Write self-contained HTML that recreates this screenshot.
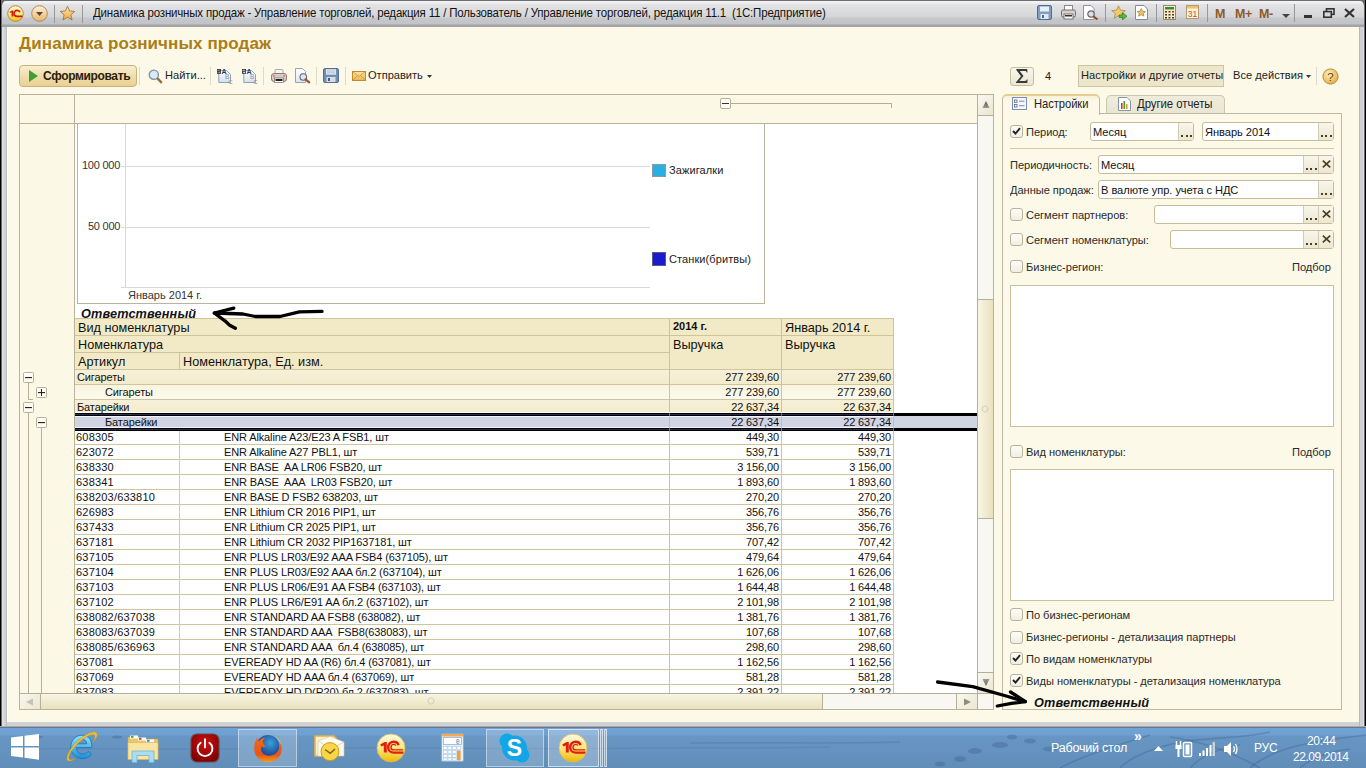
<!DOCTYPE html>
<html><head><meta charset="utf-8">
<style>
*{box-sizing:border-box;margin:0;padding:0}
html,body{width:1366px;height:768px;overflow:hidden;background:#000}
body{position:relative;font-family:"Liberation Sans",sans-serif;font-size:11px;color:#1a1a1a}
.a{position:absolute}
.t{position:absolute;white-space:pre;line-height:1}
svg{position:absolute;overflow:visible}
/* window */
#frame{left:1px;top:0;width:1364px;height:728px;background:#d0d1d4;border-radius:6px 6px 0 0}
#titlebar{left:2px;top:0;width:1362px;height:27px;border-radius:6px 6px 0 0;background:linear-gradient(#6e6e70 0,#6e6e70 1px,#f4f4f6 1px,#f0f0f2 3px,#e4e4e6 4px,#d4d5d7 17px,#c7c8cb 18px,#c2c3c6 24px,#a3a4a6 25px,#a3a4a6 27px)}
#content{left:7px;top:27px;width:1352px;height:695px;background:#fcf9e8}
.sep{position:absolute;width:1px;background:#97989b}
.tsep{position:absolute;width:1px;height:18px;background:#dedacb}

.tb{position:absolute;width:11px;height:11px;border:1px solid #b5b09a;border-radius:1.5px;background:#fdfcf5}
.tb i{position:absolute;left:1px;top:4px;width:7px;height:1px;background:#2a2410;box-shadow:0 .4px 0 rgba(42,36,16,.35)}
.tb b{position:absolute;left:4px;top:1px;width:1px;height:7px;background:#2a2410}
.hd{font-size:12.7px;color:#111}
.r{position:absolute;left:74px;width:820px;height:15px;font-size:11px;line-height:15px;color:#111;white-space:pre}
.r span{position:absolute;top:1px;letter-spacing:-0.12px}
.c1{left:2px;letter-spacing:0.2px!important}.c2{left:150px}.g1{left:3px}.g2{left:31px}
.c3{right:115px}.c4{right:3px}

.lb{font-size:11.8px;color:#2a2a2a;letter-spacing:-0.05px;transform:scaleX(0.94);transform-origin:0 0;margin-top:1px}
.inp{position:absolute;height:19px;border:1px solid #c6bd98;border-radius:3px;background:#fff}
.ib{position:absolute;width:15px;height:17px;border-left:1px solid #d2ccb4;background:linear-gradient(#f8f6ec,#ece7d2)}
.ib:last-child{}
.dots{position:absolute;left:2px;top:12px;width:11px;height:2px;background:repeating-linear-gradient(90deg,#4a4020 0,#4a4020 2px,transparent 2px,transparent 4.5px)}
.cb{position:absolute;width:13px;height:13px;border:1px solid #b9b39c;border-radius:3px;background:linear-gradient(#fdfcf8,#f1eee2)}
</style></head><body>
<div id="frame" class="a"></div>
<div class="a" style="left:1px;top:0;width:1px;height:728px;background:#6a6a6c"></div>
<div class="a" style="left:2px;top:0;width:2px;height:728px;background:#dcdde0"></div>
<div class="a" style="left:6px;top:0;width:1px;height:728px;background:#bdbec0"></div>
<div class="a" style="left:1364px;top:0;width:1px;height:728px;background:#6a6a6c"></div>
<div class="a" style="left:1363px;top:0;width:1px;height:728px;background:#dedfe2"></div>
<div class="a" style="left:1359px;top:0;width:1px;height:728px;background:#b8b9bb"></div>
<div class="a" style="left:0;top:726px;width:1366px;height:1px;background:#a9aaad"></div>
<div class="a" style="left:1px;top:0;width:1364px;height:8px;background:#69696b"></div>
<div id="titlebar" class="a"></div>
<div id="content" class="a"></div>
<div class="a" style="left:7px;top:27px;width:1px;height:695px;background:#fefdf6"></div>

<!-- title bar icons -->
<svg style="left:7px;top:5px" width="17" height="17" viewBox="0 0 17 17">
 <defs><linearGradient id="g1c" x1="0" y1="0" x2="0" y2="1"><stop offset="0" stop-color="#fff8d8"/><stop offset=".55" stop-color="#ffe680"/><stop offset="1" stop-color="#f5c400"/></linearGradient></defs>
 <circle cx="8.5" cy="8.5" r="7.8" fill="url(#g1c)" stroke="#a98b4f" stroke-width="1"/>
 <g transform="translate(.2 .4) scale(.56)"><path d="M4.2 11.6 L8.6 9 H10.8 V19.6 H7.8 V12.4 L5.4 13.6 Z" fill="#d0180a"/>
 <path d="M22.6 12.2 C22 10 20.2 8.8 17.8 8.8 C14.4 8.8 12.2 11.2 12.2 14.4 C12.2 17.6 14.6 19.6 17.8 19.6 H27.4" fill="none" stroke="#d0180a" stroke-width="3"/></g>
</svg>
<svg style="left:31px;top:5px" width="17" height="17" viewBox="0 0 17 17">
 <defs><linearGradient id="gdd" x1="0" y1="0" x2="0" y2="1"><stop offset="0" stop-color="#fff0d8"/><stop offset="1" stop-color="#e9b66d"/></linearGradient></defs>
 <circle cx="8.5" cy="8.5" r="7.8" fill="url(#gdd)" stroke="#b08a58" stroke-width="1"/>
 <path d="M5 7 L12 7 L8.5 11 Z" fill="#5a4630"/>
</svg>
<div class="sep" style="left:54px;top:5px;height:18px"></div>
<svg style="left:59px;top:5px" width="17" height="17" viewBox="0 0 17 17">
 <defs><linearGradient id="gst" x1="0" y1="0" x2="0" y2="1"><stop offset="0" stop-color="#ffe9b0"/><stop offset="1" stop-color="#f0a83a"/></linearGradient></defs>
 <path d="M8.5 1.2 L10.6 6 L15.8 6.4 L11.8 9.8 L13.1 15 L8.5 12.2 L3.9 15 L5.2 9.8 L1.2 6.4 L6.4 6 Z" fill="url(#gst)" stroke="#a07840" stroke-width=".9"/>
</svg>
<div class="sep" style="left:82px;top:5px;height:18px"></div>
<div class="t" style="left:93px;top:7px;font-size:12.6px;letter-spacing:-0.2px;color:#111;transform:scaleX(0.913);transform-origin:0 0">Динамика розничных продаж - Управление торговлей, редакция 11 / Пользователь / Управление торговлей, редакция 11.1  (1С:Предприятие)</div>

<!-- right title icons -->
<svg style="left:1037px;top:5px" width="15" height="15" viewBox="0 0 15 15">
 <rect x=".5" y=".5" width="14" height="14" rx="1.5" fill="#7f9fc2" stroke="#4f6d90"/>
 <rect x="3" y="1.5" width="9" height="5" fill="#e8eff7"/>
 <rect x="3.5" y="9" width="8" height="5" fill="#dfe6ee"/><rect x="5" y="10" width="2" height="3" fill="#4f6d90"/>
</svg>
<svg style="left:1061px;top:5px" width="15" height="15" viewBox="0 0 15 15">
 <rect x="3.5" y=".5" width="8" height="5" fill="#fff" stroke="#8a8a8a"/>
 <rect x=".5" y="5" width="14" height="7" rx="1.5" fill="#d9cfc8" stroke="#7a6d66"/>
 <rect x="3" y="9" width="9" height="5" fill="#fff" stroke="#777"/><rect x="4" y="10" width="7" height="1.5" fill="#333"/>
</svg>
<svg style="left:1083px;top:5px" width="16" height="15" viewBox="0 0 16 15">
 <path d="M.5 .5 H8 L11 3.5 V14.5 H.5 Z" fill="#fff" stroke="#8895a8"/>
 <circle cx="8" cy="9" r="3.2" fill="#cfe3f5" stroke="#7a6050" stroke-width="1.2"/>
 <path d="M10.2 11.2 L14.5 14.5" stroke="#8a4a20" stroke-width="2"/>
</svg>
<div class="sep" style="left:1105px;top:4px;height:18px"></div>
<svg style="left:1111px;top:5px" width="17" height="16" viewBox="0 0 17 16">
 <path d="M7.5 .8 L9.5 5.2 L14.3 5.6 L10.6 8.7 L11.8 13.4 L7.5 10.8 L3.2 13.4 L4.4 8.7 L.7 5.6 L5.5 5.2 Z" fill="#f5c86a" stroke="#a58a50" stroke-width=".8"/>
 <path d="M8 10 H11.5 V7.5 L16 11.2 L11.5 14.8 V12.4 H8 Z" fill="#4fbf3a" stroke="#2f7a20" stroke-width=".7"/>
</svg>
<svg style="left:1135px;top:5px" width="13" height="15" viewBox="0 0 13 15">
 <path d="M.5 .5 H9 L12.5 4 V14.5 H.5 Z" fill="#fff" stroke="#7b8ca8"/>
 <path d="M6.3 3.5 L7.6 6.3 L10.4 6.6 L8.3 8.4 L9 11.2 L6.3 9.7 L3.6 11.2 L4.3 8.4 L2.2 6.6 L5 6.3 Z" fill="#f2c35a" stroke="#8a6a40" stroke-width=".6"/>
</svg>
<div class="sep" style="left:1156px;top:4px;height:18px"></div>
<svg style="left:1163px;top:5px" width="13" height="15" viewBox="0 0 13 15">
 <rect x=".5" y=".5" width="12" height="14" fill="#f6ecc8" stroke="#9a8a60"/>
 <rect x="2" y="2" width="9" height="2.5" fill="#3a8a3a"/>
 <g fill="#4a3a2a"><rect x="2" y="6" width="2" height="1.5"/><rect x="5.5" y="6" width="2" height="1.5"/><rect x="9" y="6" width="2" height="1.5" fill="#c03020"/><rect x="2" y="9" width="2" height="1.5"/><rect x="5.5" y="9" width="2" height="1.5"/><rect x="9" y="9" width="2" height="1.5"/><rect x="2" y="12" width="2" height="1.5"/><rect x="5.5" y="12" width="2" height="1.5"/><rect x="9" y="12" width="2" height="1.5"/></g>
</svg>
<svg style="left:1186px;top:5px" width="13" height="14" viewBox="0 0 13 14">
 <rect x=".5" y=".5" width="12" height="13" fill="#fdf2dc" stroke="#b09a70"/>
 <rect x="1" y="1" width="11" height="2.5" fill="#f0c070"/>
 <text x="6.5" y="12" font-family="Liberation Sans" font-size="8.5" fill="#d04a1a" text-anchor="middle">31</text>
</svg>
<div class="sep" style="left:1207px;top:4px;height:18px"></div>
<div class="t" style="left:1215px;top:8px;font-size:12.5px;font-weight:bold;color:#8b5a2b">M</div>
<div class="t" style="left:1235px;top:8px;font-size:12.5px;font-weight:bold;color:#8b5a2b;letter-spacing:-0.5px">M+</div>
<div class="t" style="left:1259px;top:8px;font-size:12.5px;font-weight:bold;color:#8b5a2b;letter-spacing:-0.5px">M-</div>
<svg style="left:1282px;top:14px" width="9" height="5" viewBox="0 0 9 5"><path d="M0 0 H8 L4 4 Z" fill="#444"/></svg>
<div class="sep" style="left:1294px;top:4px;height:18px"></div>
<div class="a" style="left:1304px;top:15px;width:8px;height:3px;background:#333"></div>
<svg style="left:1323px;top:8px" width="12" height="10" viewBox="0 0 12 10"><rect x="3.5" y=".8" width="7.5" height="5.5" fill="none" stroke="#333" stroke-width="1.6"/><rect x=".8" y="3.6" width="7.5" height="5.6" fill="#d8d9dc" stroke="#333" stroke-width="1.6"/></svg>
<svg style="left:1344px;top:8px" width="11" height="10" viewBox="0 0 11 10"><path d="M1 1 L10 9 M10 1 L1 9" stroke="#333" stroke-width="2.2"/></svg>

<!-- form title -->
<div class="t" style="left:19px;top:35px;font-size:17px;font-weight:bold;color:#ab7d14;letter-spacing:0.1px">Динамика розничных продаж</div>

<!-- toolbar -->
<div class="a" style="left:19px;top:65px;width:118px;height:22px;border:1px solid #c9b27a;border-radius:4px;background:linear-gradient(#f9eed0,#f0dcaa 55%,#e9d094)"></div>
<svg style="left:29px;top:70px" width="9" height="12" viewBox="0 0 9 12"><path d="M0 0 L9 6 L0 12 Z" fill="#3aa034"/></svg>
<div class="t" style="left:43px;top:70px;font-size:12px;font-weight:bold;color:#2a2010;letter-spacing:-0.35px">Сформировать</div>
<div class="tsep" style="left:139px;top:67px"></div>
<svg style="left:148px;top:69px" width="15" height="15" viewBox="0 0 15 15"><circle cx="5.8" cy="5.8" r="4.6" fill="#dbe9f6" stroke="#7d8ea6" stroke-width="1.3"/><path d="M9.2 9.2 L13.8 13.8" stroke="#9a6a40" stroke-width="2.4"/></svg>
<div class="t lb" style="left:165px;top:69px;color:#222;letter-spacing:0px">Найти...</div>
<div class="tsep" style="left:210px;top:67px"></div>
<svg style="left:217px;top:68px" width="17" height="16" viewBox="0 0 17 16"><defs><linearGradient id="gpg217" x1="0" y1="0" x2="0" y2="1"><stop offset="0" stop-color="#fff"/><stop offset="1" stop-color="#d2e0ee"/></linearGradient></defs><path d="M1.8 2.5 H9.5 L13.5 6.5 V14.5 H1.8 Z" fill="url(#gpg217)" stroke="#8b98aa" stroke-width=".9"/><g stroke="#333" stroke-width=".8" fill="none"><rect x=".4" y="1.4" width="3.2" height="4"/><path d="M.4 3.4 H3.6 M2 1.4 V5.4"/></g><text x="4.6" y="6.2" font-family="Liberation Sans" font-weight="bold" font-size="7" fill="#1f3a78">A</text><text x="8" y="11.2" font-family="Liberation Sans" font-size="6.5" fill="#8a8f98">B</text><text x="11.2" y="15.6" font-family="Liberation Sans" font-size="6" fill="#8a8f98">C</text></svg>
<svg style="left:242px;top:68px" width="17" height="16" viewBox="0 0 17 16"><defs><linearGradient id="gpg242" x1="0" y1="0" x2="0" y2="1"><stop offset="0" stop-color="#fff"/><stop offset="1" stop-color="#d2e0ee"/></linearGradient></defs><path d="M1.8 2.5 H9.5 L13.5 6.5 V14.5 H1.8 Z" fill="url(#gpg242)" stroke="#8b98aa" stroke-width=".9"/><g stroke="#333" stroke-width=".8" fill="none"><rect x=".4" y="1.4" width="3.2" height="4"/><path d="M.4 3.4 H3.6"/></g><text x="4.6" y="6.2" font-family="Liberation Sans" font-weight="bold" font-size="7" fill="#1f3a78">A</text><text x="8" y="11.2" font-family="Liberation Sans" font-size="6.5" fill="#8a8f98">B</text><text x="11.2" y="15.6" font-family="Liberation Sans" font-size="6" fill="#8a8f98">C</text></svg>
<div class="tsep" style="left:263px;top:67px"></div>
<svg style="left:271px;top:69px" width="16" height="14" viewBox="0 0 16 14"><rect x="4" y=".5" width="8" height="4.5" rx=".8" fill="#f6f6f6" stroke="#9a9a9a" stroke-width=".8"/><rect x=".5" y="4.5" width="15" height="8" rx="2.5" fill="#d8ccc4" stroke="#8a7268" stroke-width=".9"/><rect x="3.5" y="9" width="9" height="4.5" fill="#fff" stroke="#7a6a66" stroke-width=".7"/><rect x="4.5" y="10" width="7" height="2" fill="#222"/><circle cx="3" cy="7" r=".7" fill="#c03030"/><circle cx="13" cy="7" r=".7" fill="#c03030"/></svg>
<svg style="left:295px;top:68px" width="16" height="15" viewBox="0 0 16 15"><defs><linearGradient id="gpv" x1="0" y1="0" x2="0" y2="1"><stop offset="0" stop-color="#fff"/><stop offset="1" stop-color="#dce6f0"/></linearGradient></defs><path d="M.5 .5 H7.5 L10.5 3.5 V14.5 H.5 Z" fill="url(#gpv)" stroke="#8e9aac" stroke-width=".9"/><circle cx="8.3" cy="9" r="3.3" fill="#d8e8f6" stroke="#6a6670" stroke-width="1.1"/><path d="M10.6 11.3 L14.2 14.3" stroke="#a0522d" stroke-width="2.2" stroke-linecap="round"/></svg>
<div class="tsep" style="left:316px;top:67px"></div>
<svg style="left:323px;top:68px" width="16" height="15" viewBox="0 0 16 15"><rect x=".5" y=".5" width="15" height="14" rx="1.5" fill="#6f8fb4" stroke="#4a6688" stroke-width=".9"/><rect x="3" y="1.2" width="10" height="5.5" fill="#dde6f0"/><path d="M4 3 H12 M4 4.8 H12" stroke="#9fb0c4" stroke-width=".6"/><rect x="3.5" y="9" width="9" height="5" fill="#d8dee6"/><rect x="5" y="10" width="2" height="3" fill="#4a5a6a"/></svg>
<div class="tsep" style="left:345px;top:67px"></div>
<svg style="left:352px;top:71px" width="14" height="10" viewBox="0 0 14 10"><defs><linearGradient id="genv" x1="0" y1="0" x2="0" y2="1"><stop offset="0" stop-color="#fbe3a0"/><stop offset="1" stop-color="#eab850"/></linearGradient></defs><rect x=".5" y=".5" width="13" height="9" fill="url(#genv)" stroke="#c08a2a"/><path d="M.8 .8 L7 5.6 L13.2 .8 M.8 9.2 L5.4 4.6 M13.2 9.2 L8.6 4.6" fill="none" stroke="#c89838" stroke-width=".8"/></svg>
<div class="t lb" style="left:368px;top:69px;color:#222;letter-spacing:-0.02px">Отправить</div>
<svg style="left:427px;top:75px" width="6" height="4" viewBox="0 0 6 4"><path d="M0 0 H5 L2.5 3 Z" fill="#333"/></svg>

<div class="a" style="left:1010px;top:67px;width:24px;height:19px;border:1px solid #c6bd9a;border-radius:3px;background:linear-gradient(#f9f7ee,#ebe6d3)"></div>
<svg style="left:1016px;top:69px" width="12" height="14" viewBox="0 0 12 14"><path d="M.3 0 H11.2 L11.5 3.4 H10.7 C10.4 2.2 9.9 2 8.6 2 H3.8 L7.5 7 L3.4 12 H8.8 C10 12 10.5 11.8 10.9 10.6 H11.7 L11.3 14 H0 V13.2 L5 7.2 L.3 .9 Z" fill="#3a3a36"/></svg>
<div class="t" style="left:1045px;top:71px;font-size:11px;color:#222">4</div>
<div class="a" style="left:1078px;top:65px;width:146px;height:22px;border:1px solid #cfc59c;background:#ece6cb"></div>
<div class="t lb" style="left:1081px;top:69px;color:#222;letter-spacing:0.1px">Настройки и другие отчеты</div>
<div class="t lb" style="left:1233px;top:69px;color:#222;letter-spacing:0.02px">Все действия</div>
<svg style="left:1306px;top:75px" width="6" height="4" viewBox="0 0 6 4"><path d="M0 0 H5 L2.5 3 Z" fill="#333"/></svg>
<div class="tsep" style="left:1316px;top:67px"></div>
<svg style="left:1322px;top:68px" width="17" height="17" viewBox="0 0 17 17"><defs><radialGradient id="ghelp" cx=".4" cy=".35" r=".7"><stop offset="0" stop-color="#fff2c0"/><stop offset="1" stop-color="#e8a83a"/></radialGradient></defs><circle cx="8.5" cy="8.5" r="7.6" fill="url(#ghelp)" stroke="#b88a40"/><text x="8.5" y="12.5" font-family="Liberation Sans" font-size="11.5" fill="#5a4020" text-anchor="middle">?</text></svg>

<!-- spreadsheet -->
<div class="a" style="left:19px;top:94px;width:975px;height:616px;border:1px solid #b9b39a;background:#fff"></div>
<div class="a" style="left:20px;top:95px;width:957px;height:28px;background:#fbf8e6"></div>
<div class="a" style="left:20px;top:123px;width:54px;height:570px;background:#fbf8e6"></div>
<div class="a" style="left:20px;top:123px;width:957px;height:1px;background:#b9b39a"></div>
<div class="a" style="left:74px;top:95px;width:1px;height:598px;background:#b9b39a"></div>
<!-- header level control -->
<div class="a" style="left:720px;top:98px;width:11px;height:11px;border:1px solid #b3ae96;border-radius:2px;background:#fdfcf4"></div>
<div class="a" style="left:722px;top:103px;width:7px;height:1px;background:#333"></div>
<div class="a" style="left:731px;top:103px;width:161px;height:1px;background:#b3ae96"></div>
<div class="a" style="left:891px;top:103px;width:1px;height:5px;background:#b3ae96"></div>
<!-- tree lines -->
<div class="a" style="left:28px;top:382px;width:1px;height:18px;background:#b5b09a"></div>
<div class="a" style="left:28px;top:399px;width:5px;height:1px;background:#b5b09a"></div>
<div class="a" style="left:28px;top:412px;width:1px;height:281px;background:#b5b09a"></div>
<div class="a" style="left:41px;top:427px;width:1px;height:266px;background:#b5b09a"></div>
<div class="tb" style="left:23px;top:372px"><i></i></div>
<div class="tb" style="left:36px;top:387px"><i></i><b></b></div>
<div class="tb" style="left:23px;top:402px"><i></i></div>
<div class="tb" style="left:36px;top:417px"><i></i></div>

<!-- chart -->
<div class="a" style="left:77px;top:124px;width:688px;height:180px;border:1px solid #b8b49e;border-top:none;background:#fff"></div>
<div class="a" style="left:125px;top:124px;width:1px;height:164px;background:#d9d9d9"></div>
<div class="a" style="left:121px;top:166px;width:529px;height:1px;background:#d9d9d9"></div>
<div class="a" style="left:121px;top:227px;width:529px;height:1px;background:#d9d9d9"></div>
<div class="a" style="left:121px;top:287px;width:529px;height:1px;background:#d9d9d9"></div>
<div class="t" style="left:82px;top:160px;font-size:11px;color:#333;letter-spacing:-0.25px">100 000</div>
<div class="t" style="left:88px;top:221px;font-size:11px;color:#333;letter-spacing:-0.25px">50 000</div>
<div class="t" style="left:128px;top:290px;font-size:11px;color:#333">Январь 2014 г.</div>
<div class="a" style="left:652px;top:164px;width:14px;height:13px;background:#29b0e0;border:1px solid #8a9aa8"></div>
<div class="t" style="left:669px;top:165px;font-size:11px;color:#222;letter-spacing:0.1px">Зажигалки</div>
<div class="a" style="left:652px;top:252px;width:14px;height:14px;background:#1a1acf;border:1px solid #5a5a8a"></div>
<div class="t" style="left:669px;top:254px;font-size:11px;color:#222;letter-spacing:0.1px">Станки(бритвы)</div>

<div class="t" style="left:81px;top:308px;font-size:12.7px;font-weight:bold;font-style:italic;color:#111;letter-spacing:0.15px">Ответственный</div>

<!-- table header -->
<div class="a" style="left:74px;top:318px;width:820px;height:51px;background:#f2eac6"></div>
<div class="a" style="left:74px;top:318px;width:820px;height:1px;background:#d0c397"></div>
<div class="a" style="left:74px;top:335px;width:820px;height:1px;background:#d0c397"></div>
<div class="a" style="left:74px;top:352px;width:595px;height:1px;background:#d0c397"></div>
<div class="a" style="left:179px;top:352px;width:1px;height:17px;background:#d0c397"></div>
<div class="t hd" style="left:78px;top:322px">Вид номенклатуры</div>
<div class="t hd" style="left:78px;top:339px">Номенклатура</div>
<div class="t hd" style="left:78px;top:356px">Артикул</div>
<div class="t hd" style="left:183px;top:356px">Номенклатура, Ед. изм.</div>
<div class="t" style="left:673px;top:321px;font-size:11px;font-weight:bold;color:#111">2014 г.</div>
<div class="t hd" style="left:785px;top:322px">Январь 2014 г.</div>
<div class="t hd" style="left:673px;top:339px">Выручка</div>
<div class="t hd" style="left:785px;top:339px">Выручка</div>

<!-- group rows -->
<div class="a" style="left:74px;top:369px;width:820px;height:15px;background:linear-gradient(#f7f1da,#f3ebcb)"></div>
<div class="a" style="left:74px;top:384px;width:820px;height:15px;background:linear-gradient(#f9f4dd,#fcfaef)"></div>
<div class="a" style="left:74px;top:399px;width:820px;height:15px;background:linear-gradient(#f7f1da,#f3ebcb)"></div>
<div class="a" style="left:74px;top:414px;width:904px;height:15px;background:#d1d5e3"></div>
<!-- grid -->
<div class="a" style="left:74px;top:369px;width:820px;height:324px;background:repeating-linear-gradient(to bottom,#cfc59c 0,#cfc59c 1px,transparent 1px,transparent 15px)"></div>
<div class="a" style="left:179px;top:429px;width:1px;height:264px;background:#d5cba3"></div>
<div class="a" style="left:669px;top:318px;width:1px;height:375px;background:#d0c397"></div>
<div class="a" style="left:781px;top:318px;width:1px;height:375px;background:#d0c397"></div>
<div class="a" style="left:893px;top:318px;width:1px;height:375px;background:#d0c397"></div>
<!-- selection lines -->
<div class="a" style="left:75px;top:412px;width:818px;height:1px;background:#fdfbf2"></div>
<div class="a" style="left:74px;top:413px;width:903px;height:3px;background:#000"></div>
<div class="a" style="left:74px;top:428px;width:903px;height:3px;background:#000"></div>
<div class="a" style="left:74px;top:414px;width:820px;height:1px;background:#2b3052"></div>
<div class="a" style="left:74px;top:429px;width:820px;height:1px;background:#2b3052"></div>
<div class="a" style="left:74px;top:416px;width:820px;height:1px;background:#f4f5fb"></div>
<div class="a" style="left:74px;top:427px;width:820px;height:1px;background:#f4f5fb"></div>
<div class="a" style="left:669px;top:413px;width:1px;height:18px;background:rgba(200,190,140,.55)"></div>
<div class="a" style="left:781px;top:413px;width:1px;height:18px;background:rgba(200,190,140,.55)"></div>
<div class="a" style="left:893px;top:413px;width:1px;height:18px;background:rgba(200,190,140,.55)"></div>
<div class="r" style="top:369px"><span class="g1">Сигареты</span><span class="c3">277 239,60</span><span class="c4">277 239,60</span></div>
<div class="r" style="top:384px"><span class="g2">Сигареты</span><span class="c3">277 239,60</span><span class="c4">277 239,60</span></div>
<div class="r" style="top:399px"><span class="g1">Батарейки</span><span class="c3">22 637,34</span><span class="c4">22 637,34</span></div>
<div class="r" style="top:414px"><span class="g2">Батарейки</span><span class="c3">22 637,34</span><span class="c4">22 637,34</span></div>
<div class="r" style="top:429px"><span class="c1">608305</span><span class="c2">ENR Alkaline A23/E23 A FSB1, шт</span><span class="c3">449,30</span><span class="c4">449,30</span></div>
<div class="r" style="top:444px"><span class="c1">623072</span><span class="c2">ENR Alkaline A27 PBL1, шт</span><span class="c3">539,71</span><span class="c4">539,71</span></div>
<div class="r" style="top:459px"><span class="c1">638330</span><span class="c2">ENR BASE  AA LR06 FSB20, шт</span><span class="c3">3 156,00</span><span class="c4">3 156,00</span></div>
<div class="r" style="top:474px"><span class="c1">638341</span><span class="c2">ENR BASE  AAA  LR03 FSB20, шт</span><span class="c3">1 893,60</span><span class="c4">1 893,60</span></div>
<div class="r" style="top:489px"><span class="c1">638203/633810</span><span class="c2">ENR BASE D FSB2 638203, шт</span><span class="c3">270,20</span><span class="c4">270,20</span></div>
<div class="r" style="top:504px"><span class="c1">626983</span><span class="c2">ENR Lithium CR 2016 PIP1, шт</span><span class="c3">356,76</span><span class="c4">356,76</span></div>
<div class="r" style="top:519px"><span class="c1">637433</span><span class="c2">ENR Lithium CR 2025 PIP1, шт</span><span class="c3">356,76</span><span class="c4">356,76</span></div>
<div class="r" style="top:534px"><span class="c1">637181</span><span class="c2">ENR Lithium CR 2032 PIP1637181, шт</span><span class="c3">707,42</span><span class="c4">707,42</span></div>
<div class="r" style="top:549px"><span class="c1">637105</span><span class="c2">ENR PLUS LR03/E92 AAA FSB4 (637105), шт</span><span class="c3">479,64</span><span class="c4">479,64</span></div>
<div class="r" style="top:564px"><span class="c1">637104</span><span class="c2">ENR PLUS LR03/E92 AAA бл.2 (637104), шт</span><span class="c3">1 626,06</span><span class="c4">1 626,06</span></div>
<div class="r" style="top:579px"><span class="c1">637103</span><span class="c2">ENR PLUS LR06/E91 AA FSB4 (637103), шт</span><span class="c3">1 644,48</span><span class="c4">1 644,48</span></div>
<div class="r" style="top:594px"><span class="c1">637102</span><span class="c2">ENR PLUS LR6/E91 AA бл.2 (637102), шт</span><span class="c3">2 101,98</span><span class="c4">2 101,98</span></div>
<div class="r" style="top:609px"><span class="c1">638082/637038</span><span class="c2">ENR STANDARD AA FSB8 (638082), шт</span><span class="c3">1 381,76</span><span class="c4">1 381,76</span></div>
<div class="r" style="top:624px"><span class="c1">638083/637039</span><span class="c2">ENR STANDARD AAA  FSB8(638083), шт</span><span class="c3">107,68</span><span class="c4">107,68</span></div>
<div class="r" style="top:639px"><span class="c1">638085/636963</span><span class="c2">ENR STANDARD AAA  бл.4 (638085), шт</span><span class="c3">298,60</span><span class="c4">298,60</span></div>
<div class="r" style="top:654px"><span class="c1">637081</span><span class="c2">EVEREADY HD AA (R6) бл.4 (637081), шт</span><span class="c3">1 162,56</span><span class="c4">1 162,56</span></div>
<div class="r" style="top:669px"><span class="c1">637069</span><span class="c2">EVEREADY HD AAA бл.4 (637069), шт</span><span class="c3">581,28</span><span class="c4">581,28</span></div>
<div class="r" style="top:684px"><span class="c1">637083</span><span class="c2">EVEREADY HD D(R20) бл.2 (637083), шт</span><span class="c3">2 391,22</span><span class="c4">2 391,22</span></div>

<div class="a" style="left:74px;top:318px;width:1px;height:375px;background:#b9b39a"></div>
<!-- scrollbars -->
<div class="a" style="left:977px;top:95px;width:16px;height:598px;border-left:1px solid #b3af98;background:#f8f7f1"></div>
<div class="a" style="left:978px;top:95px;width:15px;height:21px;border-bottom:1px solid #b3af98;background:linear-gradient(135deg,#f9f8f0,#ebe6cf)"></div>
<svg style="left:982px;top:101px" width="8" height="7" viewBox="0 0 8 7"><defs><linearGradient id="gar" x1="0" y1="0" x2="0" y2="1"><stop offset="0" stop-color="#555"/><stop offset="1" stop-color="#9a9a92"/></linearGradient></defs><path d="M4 0 L7.5 7 H.5 Z" fill="url(#gar)"/></svg>
<div class="a" style="left:978px;top:299px;width:15px;height:220px;border-top:1px solid #b3af98;border-bottom:1px solid #b3af98;background:linear-gradient(90deg,#f8f5e4,#e9e1bd)"></div>
<div class="a" style="left:978px;top:672px;width:15px;height:21px;border-top:1px solid #b3af98;background:linear-gradient(135deg,#f9f8f0,#ebe6cf)"></div>
<svg style="left:982px;top:679px" width="8" height="7" viewBox="0 0 8 7"><defs><linearGradient id="gar2" x1="0" y1="0" x2="0" y2="1"><stop offset="0" stop-color="#9a9a92"/><stop offset="1" stop-color="#666"/></linearGradient></defs><path d="M.5 0 H7.5 L4 7 Z" fill="url(#gar2)"/></svg>
<div class="a" style="left:20px;top:693px;width:957px;height:16px;border-top:1px solid #b3af98;background:#f8f7f1"></div>
<div class="a" style="left:20px;top:694px;width:21px;height:15px;border-right:1px solid #b3af98;background:linear-gradient(135deg,#f9f8f0,#ebe6cf)"></div>
<svg style="left:26px;top:698px" width="7" height="8" viewBox="0 0 7 8"><path d="M7 .5 V7.5 L0 4 Z" fill="#c4c2b6"/></svg>
<div class="a" style="left:41px;top:694px;width:782px;height:15px;border-right:1px solid #b3af98;background:linear-gradient(#f8f5e4,#e9e1bd)"></div>
<div class="a" style="left:956px;top:694px;width:21px;height:15px;border-left:1px solid #b3af98;background:linear-gradient(135deg,#f9f8f0,#ebe6cf)"></div>
<svg style="left:964px;top:698px" width="7" height="8" viewBox="0 0 7 8"><path d="M0 .5 V7.5 L7 4 Z" fill="#8f8c80"/></svg>
<div class="a" style="left:977px;top:693px;width:16px;height:16px;border-left:1px solid #b3af98;border-top:1px solid #b3af98;background:#f8f7f1"></div>

<svg style="left:981px;top:405px" width="8" height="8" viewBox="0 0 8 8"><circle cx="4" cy="4" r="3" fill="none" stroke="#d6d2c0" stroke-width="1.2"/></svg>
<svg style="left:427px;top:697px" width="8" height="8" viewBox="0 0 8 8"><circle cx="4" cy="4" r="3" fill="none" stroke="#d6d2c0" stroke-width="1.2"/></svg>
<!-- right panel -->
<div class="a" style="left:1106px;top:95px;width:119px;height:19px;border:1px solid #cbc6b0;border-bottom:none;border-radius:5px 5px 0 0;background:linear-gradient(#efecdc,#e9e5d2)"></div>
<div class="a" style="left:1002px;top:113px;width:340px;height:597px;border:1px solid #bdb9a4;background:#fcf9e8"></div>
<div class="a" style="left:1002px;top:94px;width:98px;height:21px;border:1px solid #bdb9a4;border-top:2px solid #e6ce90;border-bottom:none;border-radius:5px 5px 0 0;background:linear-gradient(#f7f1d8,#fcf9e8 6px)"></div>
<div class="a" style="left:1003px;top:113px;width:96px;height:2px;background:#fcf9e8"></div>
<svg style="left:1012px;top:97px" width="15" height="13" viewBox="0 0 15 13"><rect x=".5" y=".5" width="14" height="12" fill="#f4f6fb" stroke="#7d8cb0"/><rect x="2.5" y="3" width="2.5" height="2.5" fill="none" stroke="#5a6a8a" stroke-width=".8"/><rect x="2.5" y="7.5" width="2.5" height="2.5" fill="none" stroke="#5a6a8a" stroke-width=".8"/><path d="M7 4.2 H12.5 M7 8.7 H12.5" stroke="#7a8aa8" stroke-width="1"/></svg>
<div class="t lb" style="left:1034px;top:98px;font-size:11.9px;color:#222">Настройки</div>
<svg style="left:1118px;top:97px" width="13" height="14" viewBox="0 0 13 14"><path d="M.5 .5 H9 L12.5 4 V13.5 H.5 Z" fill="#fff" stroke="#8a94a8"/><rect x="3" y="6" width="1.6" height="6" fill="#d03a2a"/><rect x="5.5" y="4" width="1.6" height="8" fill="#3aa03a"/><rect x="8" y="7" width="1.6" height="5" fill="#e0a020"/></svg>
<div class="t lb" style="left:1137px;top:97px;font-size:12.1px;color:#222">Другие отчеты</div>
<div class="cb" style="left:1010px;top:125px"></div><svg style="left:1012px;top:127px" width="9" height="8" viewBox="0 0 9 8"><path d="M1 4 L3.5 6.5 L8 1.2" stroke="#222" stroke-width="1.9" fill="none"/></svg><div class="t lb" style="left:1026px;top:126px">Период:</div><div class="inp" style="left:1090px;top:122px;width:104px"></div><div class="t lb" style="left:1093px;top:126px;color:#111">Месяц</div><div class="ib" style="left:1178px;top:123px"><span class="dots"></span></div><div class="inp" style="left:1202px;top:122px;width:132px"></div><div class="t lb" style="left:1205px;top:126px;color:#111">Январь 2014</div><div class="ib" style="left:1318px;top:123px"><span class="dots"></span></div><div class="a" style="left:1010px;top:148px;width:324px;height:1px;background:#d3caa6"></div><div class="t lb" style="left:1010px;top:159px">Периодичность:</div><div class="inp" style="left:1098px;top:155px;width:236px"></div><div class="t lb" style="left:1101px;top:159px;color:#111">Месяц</div><div class="ib" style="left:1318px;top:156px"><svg style="left:3px;top:4px" width="9" height="8" viewBox="0 0 9 8"><path d="M.8 .6 L8.2 7.4 M8.2 .6 L.8 7.4" stroke="#4a3e14" stroke-width="1.6"/></svg></div><div class="ib" style="left:1303px;top:156px"><span class="dots"></span></div><div class="t lb" style="left:1010px;top:184px">Данные продаж:</div><div class="inp" style="left:1098px;top:180px;width:236px"></div><div class="t lb" style="left:1101px;top:184px;color:#111">В валюте упр. учета с НДС</div><div class="ib" style="left:1318px;top:181px"><span class="dots"></span></div><div class="cb" style="left:1010px;top:208px"></div><div class="t lb" style="left:1026px;top:209px">Сегмент партнеров:</div><div class="inp" style="left:1154px;top:205px;width:180px"></div><div class="ib" style="left:1318px;top:206px"><svg style="left:3px;top:4px" width="9" height="8" viewBox="0 0 9 8"><path d="M.8 .6 L8.2 7.4 M8.2 .6 L.8 7.4" stroke="#4a3e14" stroke-width="1.6"/></svg></div><div class="ib" style="left:1303px;top:206px"><span class="dots"></span></div><div class="cb" style="left:1010px;top:233px"></div><div class="t lb" style="left:1026px;top:234px">Сегмент номенклатуры:</div><div class="inp" style="left:1170px;top:230px;width:164px"></div><div class="ib" style="left:1318px;top:231px"><svg style="left:3px;top:4px" width="9" height="8" viewBox="0 0 9 8"><path d="M.8 .6 L8.2 7.4 M8.2 .6 L.8 7.4" stroke="#4a3e14" stroke-width="1.6"/></svg></div><div class="ib" style="left:1303px;top:231px"><span class="dots"></span></div><div class="cb" style="left:1010px;top:260px"></div><div class="t lb" style="left:1026px;top:261px">Бизнес-регион:</div><div class="t lb" style="left:1292px;top:261px">Подбор</div><div class="a" style="left:1010px;top:285px;width:324px;height:142px;border:1px solid #c9c09c;background:#fff"></div><div class="cb" style="left:1010px;top:445px"></div><div class="t lb" style="left:1026px;top:446px">Вид номенклатуры:</div><div class="t lb" style="left:1292px;top:446px">Подбор</div><div class="a" style="left:1010px;top:469px;width:324px;height:132px;border:1px solid #c9c09c;background:#fff"></div><div class="cb" style="left:1010px;top:608px"></div><div class="t lb" style="left:1026px;top:609px">По бизнес-регионам</div><div class="cb" style="left:1010px;top:631px"></div><div class="t lb" style="left:1026px;top:631px">Бизнес-регионы - детализация партнеры</div><div class="cb" style="left:1010px;top:652px"></div><svg style="left:1012px;top:654px" width="9" height="8" viewBox="0 0 9 8"><path d="M1 4 L3.5 6.5 L8 1.2" stroke="#222" stroke-width="1.9" fill="none"/></svg><div class="t lb" style="left:1026px;top:653px">По видам номенклатуры</div><div class="cb" style="left:1010px;top:674px"></div><svg style="left:1012px;top:676px" width="9" height="8" viewBox="0 0 9 8"><path d="M1 4 L3.5 6.5 L8 1.2" stroke="#222" stroke-width="1.9" fill="none"/></svg><div class="t lb" style="left:1026px;top:675px">Виды номенклатуры - детализация номенклатура</div><div class="t" style="left:1034px;top:697px;font-size:12.7px;font-weight:bold;font-style:italic;color:#111;letter-spacing:0.15px">Ответственный</div>
<!-- arrows -->
<svg style="left:0;top:0" width="1366" height="768" viewBox="0 0 1366 768">
 <g fill="none" stroke="#000" stroke-width="3.3" stroke-linecap="round" stroke-linejoin="round">
  <path d="M322 311.4 L299.4 311.9 L280 316.5 L255.3 316.5 L243 314 L214.3 313"/>
  <path d="M233.8 308.1 L214.3 313 L224.6 320.6 L229.7 325.2 L235.4 328.3"/>
  <path d="M937.6 682 L972.7 686.7 L1004.4 695.5 L1025.4 701.6"/>
  <path d="M1010.5 692 L1025.4 701.6 L1011.4 703.4 L997.3 706"/>
 </g>
</svg>

<!-- taskbar -->
<div class="a" style="left:0;top:727px;width:1366px;height:41px;background:linear-gradient(#6c7686 0,#6c7686 1px,#72a2d6 1px,#6ea0d0 8px,#6796c4 9px,#6592be 25px,#608eb7 41px)"></div>

<svg style="left:0;top:727px" width="1366" height="41" viewBox="0 0 1366 41">
 <g fill="none" stroke="rgba(50,85,130,.22)" stroke-width="1.5">
  <path d="M10 22 C80 21 160 23 240 22" stroke-opacity=".6"/><path d="M330 21 C420 20 520 23 640 21 C700 20 760 22 830 20" stroke-opacity=".6"/>
  <path d="M690 16 C760 15 820 17 900 15"/>
 </g>
 <g fill="rgba(45,80,125,.28)">
  <ellipse cx="37" cy="10" rx="6" ry="1.5"/><ellipse cx="117" cy="10" rx="5" ry="1.5"/><ellipse cx="330" cy="10" rx="6" ry="1.5"/>
  <ellipse cx="940" cy="37" rx="5" ry="2.5"/><ellipse cx="960" cy="32" rx="6" ry="3"/><ellipse cx="975" cy="24" rx="7" ry="3"/><ellipse cx="1000" cy="18" rx="8" ry="3"/>
  <ellipse cx="1012" cy="10" rx="5" ry="2.5"/><ellipse cx="1030" cy="14" rx="6" ry="2.5"/><ellipse cx="1050" cy="22" rx="7" ry="2.5"/>
 </g>
 <g fill="none" stroke="rgba(40,75,120,.25)" stroke-width="1.6">
  <path d="M1060 41 C1080 30 1110 20 1150 8"/><path d="M1120 41 C1130 30 1150 22 1180 15 C1210 10 1240 12 1270 5"/>
  <path d="M1190 41 C1200 30 1215 22 1240 18"/><path d="M1250 41 C1262 30 1280 22 1310 16 C1330 12 1350 10 1366 8"/>
  <path d="M1300 41 C1310 32 1325 25 1350 22"/><path d="M1170 10 C1200 14 1230 24 1260 41"/>
 </g>
</svg>
<!-- scroll grips -->
<!-- highlighted boxes -->
<div class="a" style="left:238px;top:729px;width:59px;height:38px;border:1px solid rgba(255,255,255,.45);background:rgba(255,255,255,.18)"></div>
<div class="a" style="left:486px;top:729px;width:58px;height:38px;border:1px solid rgba(255,255,255,.45);background:rgba(255,255,255,.18)"></div>
<div class="a" style="left:548px;top:729px;width:51px;height:38px;border:1px solid rgba(255,255,255,.6);background:rgba(255,255,255,.25)"></div>
<div class="a" style="left:600px;top:729px;width:3px;height:38px;border:1px solid rgba(255,255,255,.6);background:rgba(255,255,255,.2)"></div>
<div class="a" style="left:604px;top:729px;width:3px;height:38px;border:1px solid rgba(255,255,255,.6);background:rgba(255,255,255,.2)"></div>
<!-- windows logo -->
<svg style="left:11px;top:734px" width="28" height="26" viewBox="0 0 28 26"><path d="M0 3.5 L12 2 V12 H0 Z M13.5 1.8 L28 0 V12 H13.5 Z M0 13.5 H12 V23.6 L0 22 Z M13.5 13.5 H28 V25.8 L13.5 23.8 Z" fill="#fff"/></svg>
<!-- IE -->
<svg style="left:64px;top:731px" width="34" height="32" viewBox="0 0 34 32">
 <defs><linearGradient id="gie" x1="0" y1="0" x2="0" y2="1"><stop offset="0" stop-color="#8fe0fb"/><stop offset="1" stop-color="#1c8fd6"/></linearGradient></defs>
 <path d="M27.8 16.6 H12.2 C12.6 20.6 15.2 23 18.6 23 C21.2 23 23.2 21.9 24.6 20.2 L27.4 23.6 C25.2 26.2 22 27.6 18.4 27.6 C11.6 27.6 6.8 22.6 6.8 15.8 C6.8 9.2 11.6 4.2 18 4.2 C24.6 4.2 28.4 9.4 27.8 16.6 Z M12.4 12.8 H22.8 C22.4 9.8 20.6 8.2 17.8 8.2 C15 8.2 13 10 12.4 12.8 Z" fill="url(#gie)" stroke="#1770b8" stroke-width=".8"/>
 <path d="M3.6 29.6 C1 27 6 17 14 9.6 C22 2.4 30.4 -0.6 32.6 1.8 C34.2 3.6 32.4 7.6 29.2 11.6 C31 7.8 31.6 5 30.6 4 C28.6 2.2 21.4 5.4 14.6 11.8 C7.4 18.4 3.4 26 5.2 28.2 C6.2 29.2 8.4 28.8 11.4 27.4 C8.4 29.6 5 30.8 3.6 29.6 Z" fill="#f2c12e" stroke="#c8941a" stroke-width=".5"/>
</svg>
<!-- explorer -->
<svg style="left:127px;top:734px" width="32" height="29" viewBox="0 0 32 29">
 <path d="M1 3 H11 L13 5 H31 V25 H1 Z" fill="#e8c66a" stroke="#c9a04a" stroke-width=".6"/>
 <rect x="3" y="1.5" width="8" height="3" fill="#fff"/><rect x="4" y="1.8" width="2.5" height="2" fill="#3aa83a"/>
 <rect x="11" y="3.5" width="8" height="3" fill="#fff"/><rect x="12" y="3.8" width="2.5" height="2" fill="#d0402a"/>
 <rect x="19" y="5.5" width="8" height="3" fill="#fff"/><rect x="20" y="5.8" width="2.5" height="2" fill="#2a8ad0"/>
 <path d="M1 8.5 H31 V25.5 H1 Z" fill="#fbe3a0" stroke="#d8b45a" stroke-width=".6"/>
 <path d="M5 17 H27 V28.5 H22 V21.5 H10 V28.5 H5 Z" fill="#a8dcf4" stroke="#62b4e0" stroke-width=".8" opacity=".95"/>
</svg>
<!-- power -->
<svg style="left:190px;top:733px" width="30" height="30" viewBox="0 0 30 30">
 <defs><radialGradient id="gpw" cx=".5" cy=".35" r=".7"><stop offset="0" stop-color="#d01010"/><stop offset="1" stop-color="#7a0000"/></radialGradient></defs>
 <rect x="1" y="1" width="28" height="28" rx="6" fill="url(#gpw)" stroke="#6a4a4a" stroke-width="1.2"/>
 <path d="M10.6 9.8 A7.4 7.4 0 1 0 19.4 9.8" fill="none" stroke="#fff" stroke-width="1.9" stroke-linecap="round"/>
 <path d="M15 6.2 V14.4" stroke="#fff" stroke-width="1.9" stroke-linecap="round"/>
</svg>
<!-- firefox -->
<svg style="left:251px;top:733px" width="32" height="30" viewBox="0 0 32 30">
 <defs><radialGradient id="gff" cx=".6" cy=".35" r=".6"><stop offset="0" stop-color="#3aa0e0"/><stop offset="1" stop-color="#1a3f8a"/></radialGradient>
 <linearGradient id="gfo" x1="0" y1="0" x2="0" y2="1"><stop offset="0" stop-color="#f06a1a"/><stop offset=".7" stop-color="#e4561a"/><stop offset="1" stop-color="#f0a020"/></linearGradient></defs>
 <circle cx="17" cy="13.5" r="11.5" fill="url(#gff)"/>
 <path d="M4 9 C3 13 2.6 18 5 22.4 C8 27.6 14 30 19.6 29 C25.4 28 30 23.4 30.6 17.4 C31 14 30.2 10.8 28.4 8.4 C29.4 12.4 28.4 17.6 24.6 20.6 C20.8 23.6 15 23.4 11.8 20.2 C9.8 18.2 9.6 15.4 10.8 13.6 C12.2 14.6 14 14.2 15.4 13 C13.4 12.4 11.6 10.8 11.8 8.4 C12 6.6 13.4 5.6 14.6 4.6 C11.4 4.8 9 6.6 7.8 8.6 C7.4 6.8 6.6 5.6 5.4 5 C5.6 6.4 5 7.8 4 9 Z" fill="url(#gfo)"/>
 <path d="M24 3.4 C27.4 5 30 8.4 30.6 12.6 C29.4 9 27 6.2 24 3.4 Z" fill="#f8c030"/>
</svg>
<!-- outlook -->
<svg style="left:312px;top:732px" width="34" height="30" viewBox="0 0 34 30">
 <path d="M3 4 H22 L24 6 V24 H3 Z" fill="#fcefc8" stroke="#e0b24a" stroke-width="1.6"/>
 <path d="M6 9 L18 4.5 L32 10 V24 H6 Z" fill="#fffaf0" stroke="#d8c8a0" stroke-width=".6"/>
 <path d="M6 9 L19 17 L32 10" fill="none" stroke="#d8c8a0" stroke-width=".7"/>
 <circle cx="18" cy="19.6" r="9" fill="#f9d54a" stroke="#d09a1a" stroke-width="1"/>
 <path d="M13.6 18 L18.2 21.2 L22.6 17.4" fill="none" stroke="#8a6a10" stroke-width="1.5" stroke-linecap="round"/>
</svg>
<!-- 1c -->
<svg style="left:376px;top:733px" width="30" height="30" viewBox="0 0 30 30">
 <defs><linearGradient id="g1ct" x1="0" y1="0" x2="0" y2="1"><stop offset="0" stop-color="#fffbe6"/><stop offset=".5" stop-color="#ffe680"/><stop offset="1" stop-color="#f0b800"/></linearGradient></defs>
 <circle cx="15" cy="15" r="14" fill="url(#g1ct)" stroke="#d8b860" stroke-width=".8"/>
 <path d="M4.2 11.6 L8.6 9 H10.8 V19.6 H7.8 V12.4 L5.4 13.6 Z" fill="#e0200e"/>
 <path d="M22.6 12.2 C22 10 20.2 8.8 17.8 8.8 C14.4 8.8 12.2 11.2 12.2 14.4 C12.2 17.6 14.6 19.6 17.8 19.6 H27.4" fill="none" stroke="#e0200e" stroke-width="2.4"/>
 <path d="M19.8 12.6 C19.4 11.8 18.8 11.4 17.8 11.4 C16.2 11.4 15 12.6 15 14.4 C15 16 16.2 16.9 17.8 16.9 H27.2" fill="none" stroke="#e0200e" stroke-width="1.4"/>
</svg>
<!-- calc -->
<svg style="left:441px;top:733px" width="23" height="29" viewBox="0 0 23 29">
 <rect x=".5" y=".5" width="22" height="28" rx="1.5" fill="#e4f0fa" stroke="#8aaed0"/>
 <rect x="1" y="1" width="21" height="2.5" fill="#f4a850"/>
 <rect x="2.5" y="4.5" width="18" height="7" fill="#fafcff" stroke="#90b4d4" stroke-width=".8"/>
 <text x="18.6" y="10.6" font-family="Liberation Mono" font-size="6.5" fill="#5a7aa0" text-anchor="end">0</text>
 <g fill="#fff" stroke="#9cc0e0" stroke-width=".5"><rect x="2.5" y="13.5" width="3.6" height="2.8"/><rect x="7" y="13.5" width="3.6" height="2.8"/><rect x="11.5" y="13.5" width="3.6" height="2.8"/><rect x="16" y="13.5" width="3.6" height="2.8"/><rect x="2.5" y="17.5" width="3.6" height="2.8"/><rect x="7" y="17.5" width="3.6" height="2.8"/><rect x="11.5" y="17.5" width="3.6" height="2.8"/><rect x="2.5" y="21.5" width="3.6" height="2.8"/><rect x="7" y="21.5" width="3.6" height="2.8"/><rect x="11.5" y="21.5" width="3.6" height="2.8"/><rect x="2.5" y="25" width="3.6" height="2.5"/><rect x="7" y="25" width="3.6" height="2.5"/><rect x="11.5" y="25" width="3.6" height="2.5"/></g>
 <rect x="16" y="17.5" width="3.6" height="10" fill="#f0a040"/>
</svg>
<!-- skype -->
<svg style="left:499px;top:733px" width="31" height="30" viewBox="0 0 31 30">
 <circle cx="8" cy="8" r="7.5" fill="#12a5e8"/><circle cx="23" cy="22" r="7.5" fill="#12a5e8"/>
 <circle cx="15.5" cy="15" r="12.5" fill="#12a5e8"/>
 <text x="15.5" y="23" font-family="Liberation Sans" font-size="23" font-weight="bold" fill="#fff" text-anchor="middle">S</text>
</svg>
<!-- 1c active -->
<svg style="left:558px;top:733px" width="30" height="30" viewBox="0 0 30 30">
 <circle cx="15" cy="15" r="14" fill="url(#g1ct)" stroke="#d8b860" stroke-width=".8"/>
 <path d="M4.2 11.6 L8.6 9 H10.8 V19.6 H7.8 V12.4 L5.4 13.6 Z" fill="#e0200e"/>
 <path d="M22.6 12.2 C22 10 20.2 8.8 17.8 8.8 C14.4 8.8 12.2 11.2 12.2 14.4 C12.2 17.6 14.6 19.6 17.8 19.6 H27.4" fill="none" stroke="#e0200e" stroke-width="2.4"/>
 <path d="M19.8 12.6 C19.4 11.8 18.8 11.4 17.8 11.4 C16.2 11.4 15 12.6 15 14.4 C15 16 16.2 16.9 17.8 16.9 H27.2" fill="none" stroke="#e0200e" stroke-width="1.4"/>
</svg>
<!-- tray -->
<div class="t" style="left:1051px;top:742px;font-size:12.5px;color:#fff;letter-spacing:-0.2px">Рабочий стол</div>
<div class="t" style="left:1134px;top:729px;font-size:14px;font-weight:bold;color:#fff">&#187;</div>
<svg style="left:1154px;top:746px" width="9" height="5" viewBox="0 0 9 5"><path d="M0 5 L4.5 0 L9 5 Z" fill="#fff"/></svg>
<svg style="left:1175px;top:741px" width="17" height="16" viewBox="0 0 17 16"><path d="M1.5 0 V4 M5.5 0 V4" stroke="#fff" stroke-width="1.5"/><rect x=".5" y="4" width="6" height="4" fill="#fff"/><rect x="2.5" y="8" width="2" height="8" fill="#fff"/><rect x="8.5" y="1.5" width="8" height="14" rx="1" fill="none" stroke="#fff" stroke-width="1.5"/><rect x="10.5" y="3.5" width="4" height="10" fill="#fff"/></svg>
<svg style="left:1199px;top:741px" width="16" height="15" viewBox="0 0 16 15"><g fill="#fff"><rect x="0" y="12" width="2" height="3"/><rect x="3.5" y="9.5" width="2" height="5.5"/><rect x="7" y="7" width="2" height="8"/><rect x="10.5" y="4" width="2" height="11"/></g><rect x="13.5" y="1" width="2.5" height="14" fill="#c8d0d8"/></svg>
<svg style="left:1223px;top:741px" width="16" height="16" viewBox="0 0 16 16"><path d="M1 5 H4 L8 1 V15 L4 11 H1 Z" fill="#fff"/><path d="M10.5 5 Q12.5 8 10.5 11 M12.5 3 Q15.5 8 12.5 13" fill="none" stroke="#fff" stroke-width="1.3"/></svg>
<div class="t" style="left:1254px;top:742px;font-size:12px;color:#fff;letter-spacing:-0.2px">РУС</div>
<div class="t" style="left:1307px;top:735px;font-size:12px;color:#fff;letter-spacing:-0.3px">20:44</div>
<div class="t" style="left:1293px;top:751px;font-size:12px;color:#fff;letter-spacing:-0.45px">22.09.2014</div>

</body></html>
